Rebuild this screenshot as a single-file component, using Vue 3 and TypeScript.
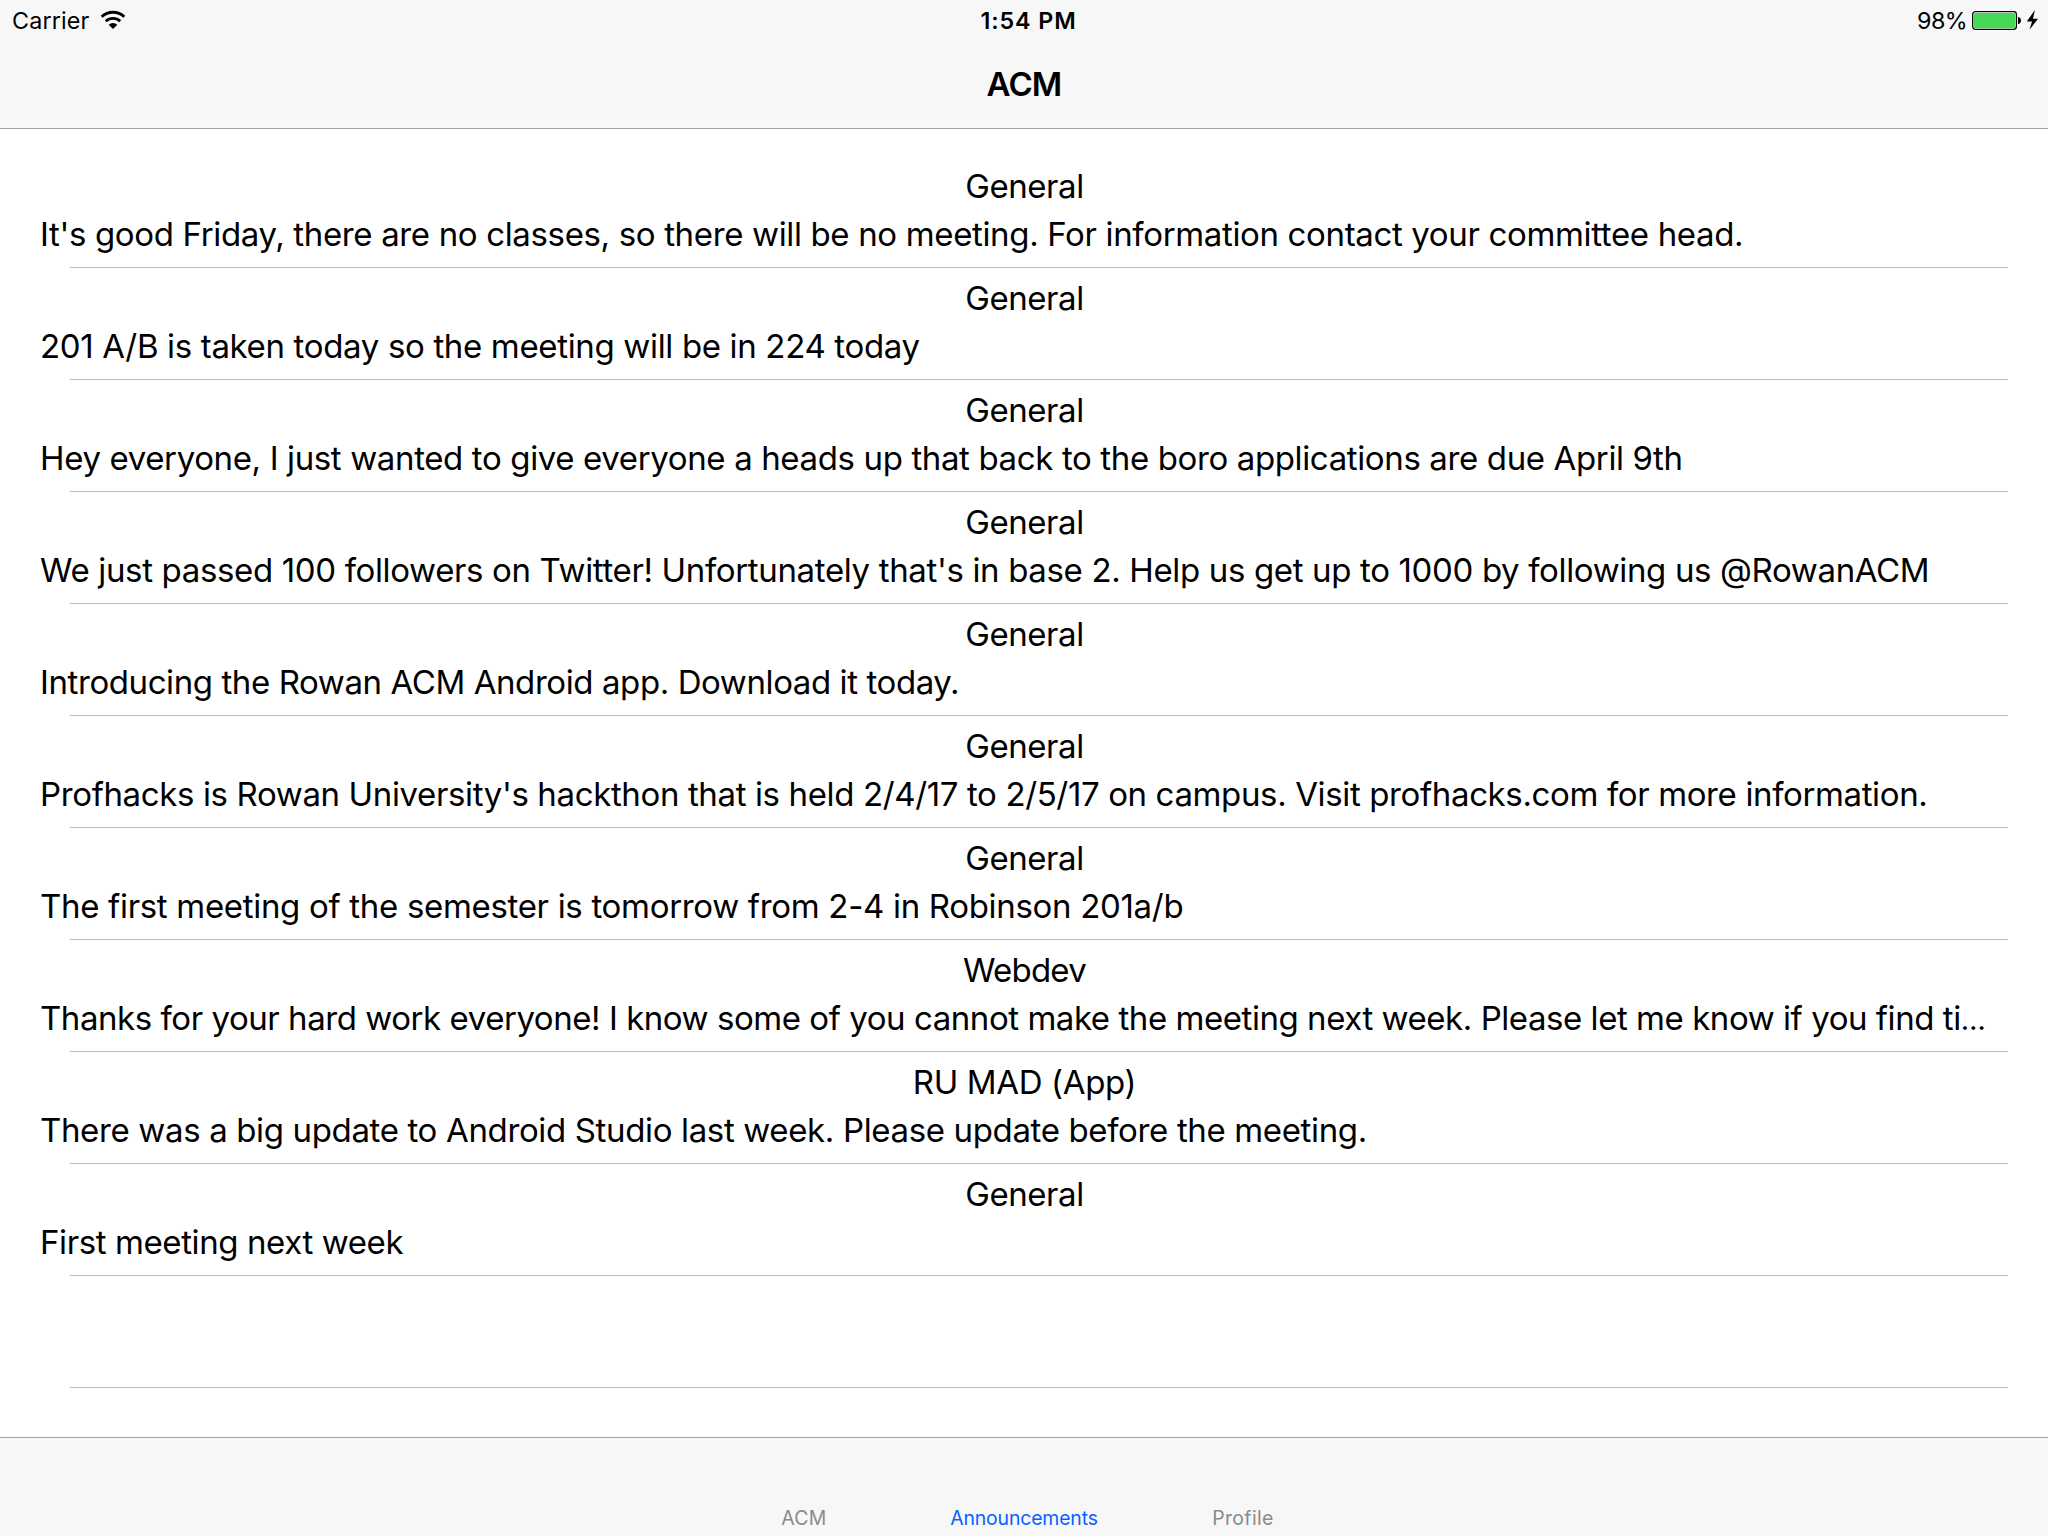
<script setup lang="ts">
interface Announcement {
  committee: string
  text: string
  tracking: number
  truncated?: boolean
}

const announcements: Announcement[] = [
  { committee: 'General', tracking: -0.35, text: "It's good Friday, there are no classes, so there will be no meeting. For information contact your committee head." },
  { committee: 'General', tracking: -0.34, text: '201 A/B is taken today so the meeting will be in 224 today' },
  { committee: 'General', tracking: -0.37, text: 'Hey everyone, I just wanted to give everyone a heads up that back to the boro applications are due April 9th' },
  { committee: 'General', tracking: -0.352, text: "We just passed 100 followers on Twitter! Unfortunately that's in base 2. Help us get up to 1000 by following us @RowanACM" },
  { committee: 'General', tracking: -0.41, text: 'Introducing the Rowan ACM Android app. Download it today.' },
  { committee: 'General', tracking: -0.37, text: "Profhacks is Rowan University's hackthon that is held 2/4/17 to 2/5/17 on campus. Visit profhacks.com for more information." },
  { committee: 'General', tracking: -0.315, text: 'The first meeting of the semester is tomorrow from 2-4 in Robinson 201a/b' },
  { committee: 'Webdev', tracking: -0.45, truncated: true, text: 'Thanks for your hard work everyone! I know some of you cannot make the meeting next week. Please let me know if you find ti' },
  { committee: 'RU MAD (App)', tracking: -0.355, text: 'There was a big update to Android Studio last week. Please update before the meeting.' },
  { committee: 'General', tracking: -0.4, text: 'First meeting next week' },
]

const committeeTracking: Record<string, number> = {
  General: -0.45,
  Webdev: -0.8,
  'RU MAD (App)': -0.35,
}

const tabs = [
  { label: 'ACM', tracking: 0.35, active: false },
  { label: 'Announcements', tracking: -0.13, active: true },
  { label: 'Profile', tracking: 0.38, active: false },
]
</script>

<template>
  <div class="screen">
    <header class="top">
      <div class="status">
        <div class="status-left">
          <span class="carrier">Carrier</span>
          <svg class="wifi" width="26" height="20" viewBox="0 0 26 20">
            <path d="M1.7 6.7A16.7 16.7 0 0 1 24.3 6.7" fill="none" stroke="#000" stroke-width="2.9" />
            <path d="M5.8 11.2A10.6 10.6 0 0 1 20.2 11.2" fill="none" stroke="#000" stroke-width="2.9" />
            <path d="M13 19L8.7 14.7A6.2 6.2 0 0 1 17.3 14.7Z" />
          </svg>
        </div>
        <div class="clock">1:54 PM</div>
        <div class="status-right">
          <span class="percent">98%</span>
          <svg width="68" height="21" viewBox="0 0 68 21">
            <rect x="0.7" y="1.7" width="43.7" height="17.7" rx="2.8" fill="#fff" stroke="#000" stroke-width="1.3" />
            <rect x="2" y="3" width="41.2" height="15.2" rx="1.5" fill="#46d755" />
            <path d="M46 7H46.6Q49 7.7 49 10.5Q49 13.3 46.6 14H46Z" />
            <path d="M62.9 0L54.8 11.4H60L57.5 19.8L66 8.7H61Z" />
          </svg>
        </div>
      </div>
      <h1 class="title">ACM</h1>
    </header>

    <main class="list">
      <article v-for="(item, i) in announcements" :key="i" class="row">
        <h2 class="committee" :style="{ letterSpacing: committeeTracking[item.committee] + 'px' }">{{ item.committee }}</h2>
        <p class="message" :style="{ letterSpacing: item.tracking + 'px' }">{{ item.text }}<span v-if="item.truncated" class="dots">…</span></p>
      </article>
      <div class="row"></div>
    </main>

    <nav class="tabs">
      <a
        v-for="tab in tabs"
        :key="tab.label"
        class="tab"
        :class="{ active: tab.active }"
        :style="{ letterSpacing: tab.tracking + 'px' }"
      >{{ tab.label }}</a>
    </nav>
  </div>
</template>

<style>
body {
  margin: 0;
  background: #fff;
}
</style>

<style scoped>
.screen {
  display: flex;
  flex-direction: column;
  width: 2048px;
  height: 1536px;
  overflow: hidden;
  background: #fff;
  color: #000;
  font-family: Inter, "Liberation Sans", sans-serif;
}

.top {
  box-sizing: border-box;
  height: 129px;
  flex: none;
  background: #f7f7f7;
  border-bottom: 1px solid #a3a3a3;
}

.status {
  display: grid;
  grid-template-columns: 1fr auto 1fr;
  height: 40px;
  font-size: 23.3px;
  line-height: 41px;
}

.status-left,
.status-right {
  display: flex;
  align-items: flex-start;
}

.status-left {
  padding-left: 12px;
}

.carrier {
  width: 88px;
  letter-spacing: 0.15px;
}

.wifi {
  margin-top: 10px;
}

.clock {
  padding-left: 9px;
  font-weight: 600;
  letter-spacing: 0.9px;
}

.status-right {
  justify-content: flex-end;
  padding-right: 8px;
}

.status-right svg {
  margin-top: 10px;
}

.percent {
  width: 55px;
  letter-spacing: -0.5px;
}

.title {
  margin: 0;
  padding-top: 24px;
  font-size: 33px;
  font-weight: 600;
  line-height: 40px;
  letter-spacing: -0.9px;
  text-align: center;
}

.list {
  flex: 1;
  padding: 27px 40px 0;
}

.row {
  box-sizing: border-box;
  height: 112px;
  padding-top: 10px;
  background: linear-gradient(#bcbcbe, #bcbcbe) 30px 100% / calc(100% - 30px) 1px no-repeat;
}

.row:last-child {
  padding-top: 0;
}

.committee,
.message {
  margin: 0;
  font-size: 33px;
  font-weight: 400;
  line-height: 40px;
  white-space: nowrap;
}

.committee {
  padding-left: 1px;
  text-align: center;
}

.message {
  margin-top: 8px;
}

.row {
  background-position: right bottom;
}

.dots {
  font-size: 29px;
  letter-spacing: 0;
}

.tabs {
  box-sizing: border-box;
  display: flex;
  justify-content: center;
  flex: none;
  height: 99px;
  padding-top: 68px;
  background: #f7f7f7;
  border-top: 1px solid #a3a3a3;
}

.tab {
  width: 220px;
  text-align: center;
  font-size: 19.4px;
  line-height: 24px;
  color: #8a8a8a;
}

.tab:last-child {
  width: 218px;
  margin-right: 2px;
}

.tab.active {
  color: #0a60ff;
}
</style>
